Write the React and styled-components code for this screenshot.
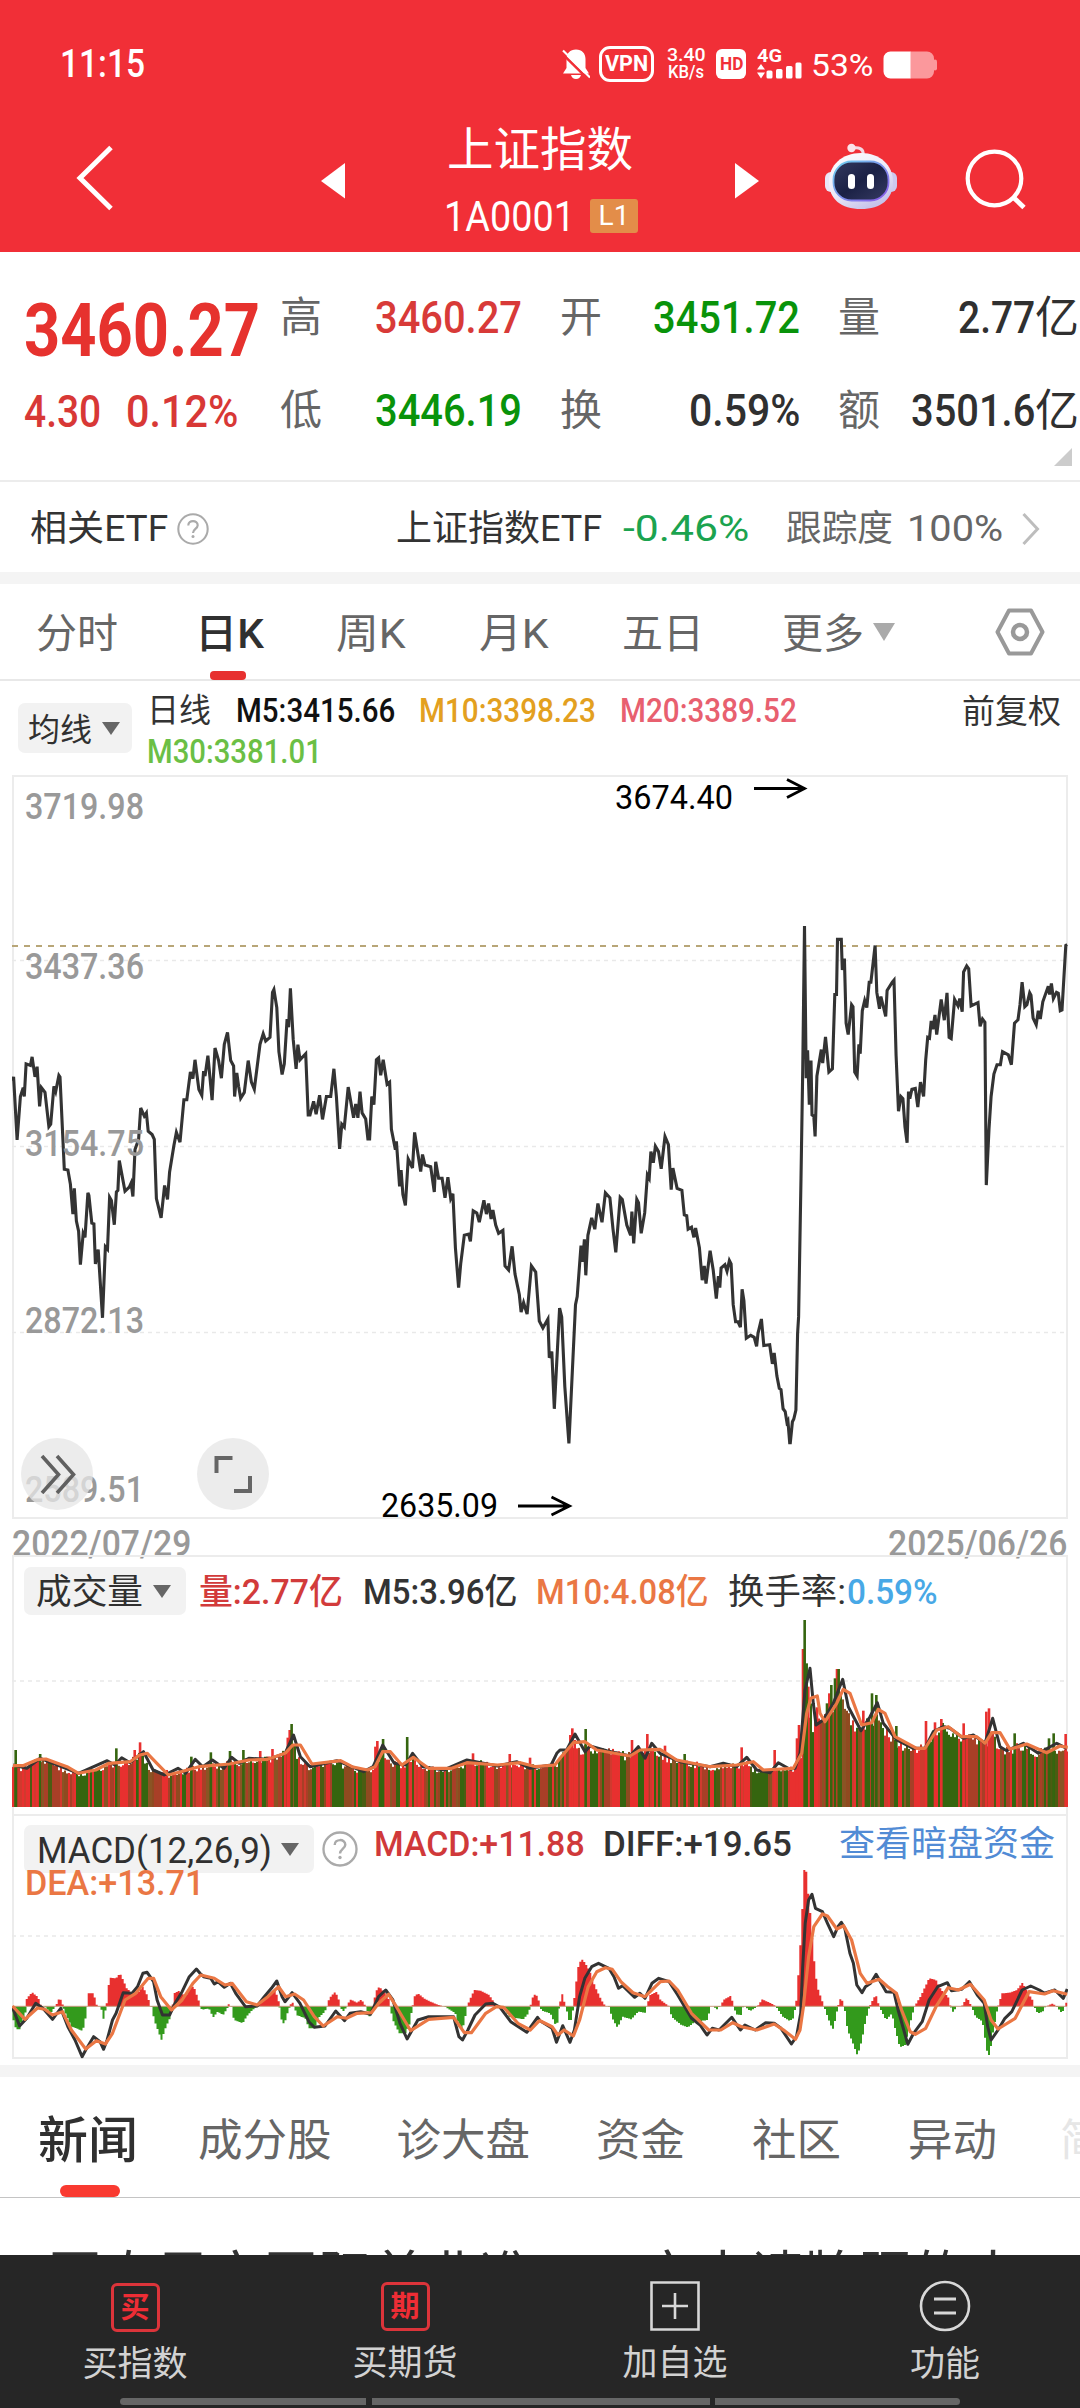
import React, { useLayoutEffect, useRef, useState } from "react";
import styled, { createGlobalStyle } from "styled-components";

const GlobalStyle = createGlobalStyle`
  * { box-sizing: border-box; }
  html, body { margin: 0; padding: 0; background: #fff; }
  body { font-family: Roboto, "Noto Sans CJK SC", sans-serif; color: #333; }
  svg { display: block; flex: none; }
`;

/* ---------- text condensed to a given width ---------- */
const FitBox = styled.span`
  display: inline-block;
  flex: none;
  white-space: nowrap;
  width: ${(p) => p.$width}px;
  margin-left: ${(p) => p.$gap || 0}px;
  color: ${(p) => p.$color || "inherit"};
`;
const FitInner = styled.span`
  display: inline-block;
  transform-origin: 0 50%;
`;
function Fit({ width, gap, color, children }) {
  const ref = useRef(null);
  const [k, setK] = useState(1);
  useLayoutEffect(() => {
    setK(width / ref.current.offsetWidth);
  }, [width, children]);
  return (
    <FitBox $width={width} $gap={gap} $color={color}>
      <FitInner ref={ref} style={{ transform: `scaleX(${k})` }}>
        {children}
      </FitInner>
    </FitBox>
  );
}

const Screen = styled.div`
  width: 1080px;
  height: 2408px;
  overflow: hidden;
  display: flex;
  flex-direction: column;
  background: #fff;
`;
const Divider = styled.div`
  height: 12px;
  flex: none;
  margin-top: ${(p) => p.$gap || 0}px;
  background: #f4f4f4;
`;

/* ---------- header ---------- */
const Header = styled.header`
  height: 252px;
  flex: none;
  background: #f12f37;
  color: #fff;
`;
const StatusBar = styled.div`
  display: flex;
  align-items: center;
  height: 84px;
  padding: 43px 0 0 60px;
  font-size: 39px;
  line-height: 42px;
`;
const Clock = styled.div`
  font-weight: 500;
`;
const StatusIcons = styled.div`
  display: flex;
  align-items: center;
  margin-left: 417px;
`;
const VpnBadge = styled.div`
  width: 55px;
  height: 36px;
  margin-left: 9px;
  border: 3px solid #fff;
  border-radius: 11px;
  font: 700 22px/30px Roboto, sans-serif;
  text-align: center;
`;
const Speed = styled.div`
  margin-left: 11px;
  width: 42px;
  display: flex;
  flex-direction: column;
  align-items: center;
  font: 500 17.5px/17px Roboto, sans-serif;
`;
const HdBadge = styled.div`
  width: 30px;
  height: 30px;
  margin-left: 9px;
  border-radius: 6px;
  background: #fff;
  color: #f12f37;
  font: 700 18px/30px Roboto, sans-serif;
  text-align: center;
`;
const Percent = styled.div`
  margin: 2px 0 0 8px;
  font-size: 32px;
`;
const NavBar = styled.div`
  display: flex;
  height: 168px;
  align-items: flex-start;
`;
const TitleBlock = styled.div`
  width: 390px;
  display: flex;
  flex-direction: column;
  align-items: center;
`;
const Title = styled.h1`
  margin: 37px 0 0;
  font-size: 46.5px;
  line-height: 58px;
  font-weight: 400;
`;
const CodeLine = styled.div`
  display: flex;
  align-items: center;
  margin: 17px 0 0 2px;
  height: 40px;
  font-size: 43px;
  line-height: 40px;
`;
const LevelTag = styled.span`
  width: 48px;
  height: 34px;
  margin-left: 15px;
  border-radius: 3px;
  background: #e38d49;
  font-size: 28px;
  line-height: 34px;
  text-align: center;
`;

/* ---------- quote ---------- */
const Quote = styled.section`
  position: relative;
  display: flex;
  height: 230px;
  flex: none;
  border-bottom: 2px solid #ececec;
`;
const PriceBlock = styled.div`
  width: 280px;
  padding: 40px 0 0 24px;
  color: #d83836;
  font-weight: 500;
`;
const Price = styled.div`
  font-size: 75px;
  line-height: 76px;
  font-weight: 700;
  color: #e6322e;
`;
const Change = styled.div`
  margin-top: 12px;
  font-size: 45px;
  line-height: 64px;
`;
const Stats = styled.div`
  flex: 1;
  display: grid;
  grid-template-columns: 242px 240px 241px;
  grid-auto-rows: 93px;
  column-gap: 38px;
  padding-top: 19px;
`;
const Stat = styled.div`
  display: flex;
  align-items: center;
  justify-content: space-between;
  font-size: 45px;
  line-height: 60px;
  font-weight: 500;
  color: ${(p) => p.$color || "#303030"};
`;
const StatLabel = styled.span`
  font-size: 42px;
  font-weight: 400;
  color: #666;
`;
const Unit = styled.span`
  font-size: 44px;
  font-weight: 400;
`;
const StatValue = styled.span`
  display: flex;
`;
const Corner = styled.div`
  position: absolute;
  right: 8px;
  bottom: 14px;
  border-left: 18px solid transparent;
  border-bottom: 18px solid #ccc;
`;

/* ---------- related fund ---------- */
const FundRow = styled.section`
  display: flex;
  align-items: center;
  height: 90px;
  flex: none;
  padding: 4px 0 0 30px;
  font-size: 36px;
  line-height: 50px;
`;
const FundLink = styled.div`
  display: flex;
  align-items: center;
  margin-left: 187px;
`;

/* ---------- period tabs ---------- */
const PeriodTabs = styled.nav`
  display: flex;
  align-items: center;
  height: 97px;
  flex: none;
  padding-left: 36px;
  border-bottom: 2px solid #e8e8e8;
  font-size: 41px;
  line-height: 60px;
  color: #666;
`;
const PeriodTab = styled.div`
  position: relative;
  margin-left: ${(p) => p.$gap || 0}px;
  padding-top: 5px;
  font-weight: ${(p) => (p.$active ? 500 : 400)};
  color: ${(p) => (p.$active ? "#303030" : "#666")};
  &::after {
    content: "";
    display: ${(p) => (p.$active ? "block" : "none")};
    position: absolute;
    left: 15px;
    bottom: -16px;
    width: 36px;
    height: 9px;
    border-radius: 4px;
    background: #e7302f;
  }
`;
const Triangle = styled.i`
  display: block;
  flex: none;
  margin-left: ${(p) => p.$gap}px;
  border: ${(p) => p.$size / 2}px solid transparent;
  border-bottom-width: 0;
  border-top: ${(p) => p.$drop}px solid ${(p) => p.$color || "#666"};
`;

/* ---------- moving averages ---------- */
const MaRow = styled.section`
  display: flex;
  height: 94px;
  flex: none;
  padding-left: 18px;
`;
const Chip = styled.div`
  display: flex;
  align-items: center;
  flex: none;
  width: ${(p) => p.$width}px;
  height: ${(p) => p.$height}px;
  padding-left: ${(p) => p.$pad}px;
  border-radius: 7px;
  background: #f2f2f2;
  font-size: ${(p) => p.$font}px;
  color: #303030;
  line-height: 40px;
`;
const MaChipSlot = styled.div`
  padding-top: 22px;
`;
const ChipLabel = styled.span`
  padding-top: 3px;
  font-weight: 400;
`;
const MaLegend = styled.div`
  width: 830px;
  padding: 10px 0 0 15px;
  font-size: 32.5px;
  line-height: 41px;
  font-weight: 500;
`;
const MaLine = styled.div`
  display: flex;
  height: 41px;
`;
const Plain = styled.span`
  font-weight: 400;
`;
const Adjust = styled.div`
  padding-top: 10px;
  font-size: 33px;
  line-height: 41px;
`;

/* ---------- charts ---------- */
const PriceChart = styled.section`
  position: relative;
  height: 744px;
  flex: none;
  margin: 0 12px;
`;
const RoundButton = styled.button`
  position: absolute;
  left: ${(p) => p.$left}px;
  bottom: 9px;
  width: 72px;
  height: 72px;
  padding: 0;
  border: 0;
  border-radius: 50%;
  background: rgba(230, 230, 230, 0.76);
  display: flex;
  align-items: center;
  justify-content: center;
`;
const DateRow = styled.div`
  display: flex;
  justify-content: space-between;
  height: 36px;
  flex: none;
  padding: 12px 13px 0 12px;
  font-size: 36.5px;
  line-height: 25px;
  color: #999;
  font-weight: 500;
`;
const Panel = styled.section`
  position: relative;
  flex: none;
  height: ${(p) => p.$height}px;
  margin: 0 12px;
  box-shadow: inset 2px 0 #ececec, inset -2px 0 #ececec, inset 0 2px #ececec,
    inset 0 ${(p) => (p.$closed ? -2 : 0)}px #ececec;
`;
const Toolbar = styled.div`
  display: flex;
  align-items: center;
  padding: 12px 0 0 12px;
  height: 60px;
  font-size: 35.5px;
  line-height: 44px;
  font-weight: 500;
`;
const Readings = styled.div`
  display: flex;
  padding-top: 2px;
`;
const MacdToolbar = styled(Toolbar)`
  position: relative;
  z-index: 1;
  align-items: flex-start;
  padding-top: 11px;
  height: 50px;
`;
const MacdReadings = styled.div`
  display: flex;
  margin-top: -3px;
`;
const DeaLine = styled.div`
  position: relative;
  z-index: 1;
  padding-left: 13px;
  font-size: 35.5px;
  line-height: 38px;
  font-weight: 500;
`;
const HelpSlot = styled.div`
  margin: 6px 0 0 8px;
`;
const MacdLayer = styled.svg`
  position: absolute;
  left: 0;
  bottom: 0;
`;

/* ---------- news ---------- */
const NewsTabs = styled.nav`
  display: flex;
  height: 121px;
  flex: none;
  padding: 34px 0 0 38px;
  border-bottom: 1px solid #c4c4c4;
  font-size: 44.5px;
  line-height: 60px;
  color: #666;
  overflow: hidden;
`;
const NewsTab = styled.div`
  position: relative;
  flex: none;
  margin-left: ${(p) => p.$gap || 0}px;
  font-size: ${(p) => (p.$active ? 50 : 44.5)}px;
  font-weight: ${(p) => (p.$active ? 500 : 400)};
  color: ${(p) => (p.$active ? "#303030" : p.$faint ? "#e6e6e6" : "#666")};
  &::after {
    content: "";
    display: ${(p) => (p.$active ? "block" : "none")};
    position: absolute;
    left: 22px;
    top: 74px;
    width: 60px;
    height: 12px;
    border-radius: 6px;
    background: #f93a30;
  }
`;
const Headline = styled.div`
  height: 57px;
  flex: none;
  padding: 48px 0 0 48px;
  overflow: hidden;
  white-space: nowrap;
  font-size: 54px;
  line-height: 64px;
`;

/* ---------- bottom bar ---------- */
const BottomBar = styled.footer`
  height: 153px;
  flex: none;
  background: #262626;
  color: #d2d2d2;
`;
const Actions = styled.div`
  display: grid;
  grid-template-columns: repeat(4, 270px);
  height: 143px;
`;
const Action = styled.div`
  display: flex;
  flex-direction: column;
  align-items: center;
  padding-top: ${(p) => p.$top}px;
  font-size: 35px;
  line-height: 40px;
  gap: 13px;
`;
const CharIcon = styled.div`
  width: 49px;
  height: 49px;
  border: 3px solid #dc343a;
  border-radius: 6px;
  color: #ee2d35;
  font-size: 29px;
  line-height: 45px;
  font-weight: 700;
  text-align: center;
`;
const HomeBar = styled.div`
  display: grid;
  grid-template-columns: 246px 338px 245px;
  column-gap: 5.5px;
  padding-left: 120px;
`;
const HomePiece = styled.i`
  height: 7px;
  background: #666;
  border-radius: ${(p) => p.$radius || "0"};
`;

/* ---------- series ---------- */
const parse = (text, sx, sy, ox, oy) =>
  text
    .trim()
    .split(/\s+/)
    .map((pair) => pair.split(",").map(Number))
    .map(([x, y]) => [ox + x / sx, oy + y / sy]);
const toPoints = (list) => list.map((p) => `${p[0].toFixed(1)},${p[1].toFixed(1)}`).join(" ");

const price = [
  ...parse(
    `35,762 38,752 48,906 57,800 65,778 68,800 73,720 85,724 90,703 98,752 104,727 111,824 116,778 126,790 137,874 142,868 151,775 156,788 165,748 168,752 180,978 190,980 197,1015 204,1088 208,1025 214,1105 220,1130 225,1212 233,1135 238,1145 246,1036 249,1042 257,1110 263,1112 267,1210 275,1175 287,1342 295,1168 301,1174 307,1047 312,1055 320,1114 326,1034 330,1030 334,957 350,1032 362,1022 367,1012 372,1045 378,930 388,905 394,828 404,848 410,840 415,885 426,893 432,905 438,1050 451,1097 461,1018 469,1052 475,985 487,920 494,888 504,912 515,808 523,808 533,740 540,756 546,710 557,783 565,797 570,738 574,750 582,700 594,809 602,681 612,712 620,755 628,672 637,643 646,712 654,725 657,800 663,742 668,775 674,804 684,790 695,712 704,765 712,782 728,672 737,646 744,664 756,655 763,545 767,538 775,582 781,690 790,746 796,720 804,610 808,630 813,535 821,660 829,732 834,673 840,710 856,695 863,845 868,845 878,812 885,843 895,797 903,856 914,800 926,800 935,732 942,800 951,928 957,868 964,875 975,777 990,852 996,818 1002,852 1008,788 1014,840 1024,855 1030,904 1035,904 1041,800 1047,820 1054,710 1060,705 1066,748 1073,710 1084,770 1091,765 1096,880 1107,930 1110,910 1119,1020 1123,980 1128,1040 1135,1067 1143,953 1155,975 1161,888 1178,984 1183,942 1190,968 1206,972 1216,1034 1220,960 1228,1000 1238,1000 1246,1048 1254,998 1262,1050 1268,1038 1275,1170 1284,1268 1290,1210 1300,1140 1312,1137 1317,1155 1325,1080 1335,1085 1342,1108 1355,1054 1362,1088 1368,1062 1375,1100 1380,1078 1388,1115 1396,1135 1408,1128 1414,1215 1424,1225 1434,1167 1442,1235 1454,1285 1459,1328 1466,1305 1476,1333 1488,1215 1500,1230 1510,1350 1520,1367 1534,1345 1538,1440 1545,1425 1552,1565`,
    2.8, 2.45, 0, 770
  ),
  ...parse(
    `57,1318 63,1340 72,1510 84,1650 94,1470 103,1310 108,1290 119,1165 124,1205 129,1150 133,1238 139,1140 150,1097 159,1125 168,1062 180,1108 190,1036 203,1048 212,1125 220,1182 233,1047 239,1052 252,1115 263,1140 267,1082 272,1160 281,1052 286,1060 294,1135 304,1085 312,992 317,1000 322,935 329,962 335,922 344,935 352,977 363,898 373,918 381,1028 386,975 398,1025 412,1030 419,1090 426,1092 430,1125 440,1120 447,1145 452,1122 463,1170 471,1250 477,1215 482,1258 494,1178 503,1225 512,1295 518,1240 522,1268 526,1220 537,1212 543,1228 550,1202 555,1210 561,1310 568,1352 575,1352 582,1365 587,1272 592,1300 599,1392 612,1385 622,1390 629,1412 633,1380 643,1345 650,1410 667,1408 675,1455 680,1428 688,1485 695,1515 700,1518 706,1565 712,1572 717,1598 720,1594 725,1648 727,1648 733,1597 737,1590 743,1568 748,1380 751,1340 758,1000 763,740 768,382 773,755 777,687 782,820 787,712 790,845 795,848 799,898 804,750 817,685 821,718 829,654 839,740 849,732 856,550 861,550 864,415 875,415 878,490 884,462 889,620 895,648 905,575 909,580 914,740 921,750 926,672 930,695 936,590 943,565 949,582 956,520 961,520 973,430 978,545 986,585 990,555 1004,604 1008,540 1023,520 1028,515 1034,700 1041,836 1048,800 1054,805 1060,875 1066,913 1070,788 1074,805 1080,782 1090,780 1097,826 1105,765 1114,800 1120,710 1126,655 1131,657 1136,615 1141,635 1147,600 1152,648 1165,562 1174,613 1182,546 1188,655 1194,658 1204,562 1214,578 1219,560 1226,592 1230,495 1239,480 1245,487 1252,578 1272,570 1278,628 1285,610 1292,618 1296,1017 1304,880 1310,800 1318,745 1327,722 1337,722 1343,690 1360,698 1369,722 1378,620 1388,612 1394,575 1400,520 1408,580 1414,575 1422,546 1426,552 1432,608 1441,624 1447,590 1453,610 1460,568 1476,530 1480,550 1485,523 1491,560 1500,545 1505,547 1511,590 1516,588 1527,430 1531,428`,
    2.904, 2.45, 540, 770
  ),
];

const volLeft = [2.613, 3, 0, 1370];
const volRight = [3, 3, 560, 1370];
const volM10 = [
  ...parse(
    `34,1187 60,1187 100,1168 120,1167 150,1180 175,1190 205,1210 250,1200 285,1180 340,1175 365,1155 385,1150 410,1180 440,1215 480,1203 520,1190 600,1182 650,1170 700,1168 745,1150 765,1125 785,1125 815,1182 890,1172 920,1190 960,1200 980,1190 1000,1145 1020,1145 1050,1185 1080,1162 1120,1195 1180,1195 1220,1178 1300,1185 1360,1178 1400,1190 1450,1185`,
    ...volLeft
  ),
  ...parse(
    `0,1165 40,1118 75,1115 110,1140 210,1158 240,1140 300,1138 350,1170 450,1190 530,1185 580,1175 610,1200 700,1195 725,1150 740,1030 752,985 772,978 780,1030 795,1055 830,1000 850,958 870,970 905,1065 935,1058 955,1018 975,1030 1005,1100 1070,1135 1095,1135 1130,1080 1165,1070 1205,1100 1250,1100 1275,1120 1295,1088 1320,1088 1350,1138 1400,1122 1460,1148 1500,1128 1523,1132`,
    ...volRight
  ),
];
const volM5 = [
  ...parse(
    `34,1185 70,1195 105,1165 150,1185 205,1210 280,1172 300,1185 318,1163 340,1178 375,1145 400,1200 430,1215 465,1195 485,1210 510,1168 530,1190 555,1170 585,1195 605,1162 625,1180 650,1165 700,1168 745,1150 767,1095 785,1160 810,1190 880,1172 950,1205 975,1190 1000,1125 1030,1180 1060,1185 1078,1150 1105,1190 1160,1200 1220,1170 1300,1188 1350,1175 1385,1195 1440,1185 1455,1150`,
    ...volLeft
  ),
  ...parse(
    `0,1140 20,1140 45,1092 75,1145 90,1128 140,1142 210,1158 235,1130 255,1165 275,1120 300,1150 360,1175 450,1190 490,1180 530,1190 560,1162 590,1200 630,1208 655,1178 690,1198 705,1195 720,1150 735,960 750,895 760,1000 768,1065 790,1050 820,1000 848,928 865,1010 903,1082 930,1040 952,998 970,1060 1010,1110 1060,1135 1095,1135 1120,1085 1150,1070 1170,1075 1210,1105 1240,1095 1275,1120 1298,1045 1320,1130 1340,1142 1390,1120 1435,1150 1490,1120 1520,1135`,
    ...volRight
  ),
];
const RED = "#e8302f";
const GREEN = "#35650f";
const spikes = [
  [RED, parse("366,1117 757,1080 752,1103 986,1113 981,1130 680,1143 712,1137 1236,1150 1332,1152 1385,1163 352,1140", ...volLeft)],
  [GREEN, parse("41,1140 304,1135 762,1062 1001,1107 1064,1101 551,1147 601,1143 636,1140 500,1160 105,1152", ...volLeft)],
  [RED, parse("717,1065 711,1105 729,837 745,950 831,897 808,970 910,1022 1098,1053 1144,1047 1125,1057 1211,1060 1287,1015 1279,1025 1517,1092 37,1075 31,1095 262,1092 216,1110 315,1127 545,1132 644,1140 771,1012", ...volRight)],
  [GREEN, parse("734,750 740,880 836,897 814,945 825,925 936,970 949,975 1009,1068 1364,1090 1481,1090 1467,1105 77,1077 801,1000 374,1152", ...volRight)],
];
const levelAt = (line, x) => {
  for (let i = 1; i < line.length; i++) {
    if (x <= line[i][0]) {
      const [ax, ay] = line[i - 1];
      const [bx, by] = line[i];
      return ay + ((by - ay) * Math.max(0, x - ax)) / (bx - ax || 1);
    }
  }
  return line[line.length - 1][1];
};
const volumeBars = (() => {
  let seed = 41;
  const rnd = () => {
    seed = (seed * 16807) % 2147483647;
    return seed / 2147483647;
  };
  const tones = [RED, RED, "#d03a2e", GREEN, GREEN, "#4b5c12", "#8f4a20", "#8a5424", "#a83f27"];
  const bars = [];
  let tone = RED;
  for (let x = 12; x < 1067; x += 2) {
    if (rnd() > 0.3) tone = tones[Math.floor(rnd() * tones.length)];
    const base = Math.max(levelAt(volM5, x + 4), levelAt(volM10, x));
    const size = 1807 - base;
    bars.push([x, base - size * (rnd() * 0.18 - 0.1), tone]);
  }
  return bars;
})();

/* Histogram outline sampled every 2px, drawn as steps on the zero line. */
const ZERO = 2006.3;
const steps = (outline) => {
  const first = outline[0][0];
  const last = outline[outline.length - 1][0];
  let d = `M${first} ${ZERO}`;
  for (let x = first; x < last; x += 2) {
    const y = levelAt(outline, x + 1).toFixed(1);
    d += `V${y}H${Math.min(x + 2, last).toFixed(1)}`;
  }
  return `${d}V${ZERO}Z`;
};

const macdL = [2.8, 3, 0, 1800];
const macdR = [2.904, 3, 540, 1800];
const macdRed = [
  [macdL, "72,619 75,595 90,577 105,590 112,605 115,619 156,619 167,592 178,619 245,619 247,580 262,580 272,619 298,619 303,560 310,533 325,535 336,520 345,540 355,565 370,580 385,580 400,560 412,585 422,619 483,619 487,580 500,573 520,590 532,560 543,560 556,600 562,619 636,619 641,612 646,619 720,619 740,595 770,570 780,600 782,619 812,619 817,603 825,619 915,619 922,595 937,577 947,590 952,619 972,619 980,598 1000,608 1012,598 1024,619 1045,619 1052,575 1062,560 1075,575 1090,600 1092,619 1155,619 1160,590 1170,580 1190,597 1220,612 1240,619 1308,619 1315,600 1328,570 1345,572 1370,585 1385,610 1395,619 1485,619 1490,595 1500,580 1508,600 1512,619"],
  [macdR, "56,619 64,580 74,619 97,619 102,570 112,495 121,477 132,490 145,515 160,560 178,600 190,619 310,619 320,585 340,575 350,600 375,619 525,619 532,600 555,587 562,619 632,619 645,598 675,612 685,619 743,619 752,500 758,400 763,300 768,200 772,200 777,260 785,340 795,470 805,560 825,619 865,619 874,592 884,619 957,619 975,583 985,619 1088,619 1105,590 1130,535 1150,540 1165,570 1185,590 1192,619 1225,619 1240,592 1253,619 1330,619 1342,580 1365,578 1385,570 1401,548 1415,575 1430,600 1435,619 1470,619 1490,610 1497,619 1525,619 1531,600"],
];
const macdGreen = [
  [macdL, "35,650 45,688 55,688 62,660 71,650 72,619 125,619 142,640 155,619 175,619 185,645 200,680 215,685 228,692 236,680 243,630 244,619 282,619 290,657 298,619 424,619 432,660 452,720 465,680 478,650 483,619 562,619 565,630 585,625 597,652 610,635 625,645 640,619 648,619 655,660 680,670 690,650 705,632 720,619 782,619 790,670 797,670 805,640 812,619 825,619 830,645 855,655 865,685 880,685 895,650 910,635 915,619 952,619 960,635 972,619 1024,619 1035,650 1045,619 1092,619 1100,660 1118,700 1135,700 1148,670 1155,619 1245,619 1275,640 1285,680 1295,690 1305,640 1308,619 1410,619 1425,650 1465,658 1480,640 1485,619 1515,619 1530,635 1545,640 1555,670 1560,675 1565,640 1567,619"],
  [macdR, "0,619 5,632 30,640 46,677 52,650 56,619 75,619 87,672 95,640 97,619 200,619 210,655 225,683 240,650 265,658 285,635 305,638 310,619 375,619 382,650 410,675 430,682 450,665 487,660 495,619 505,619 513,629 522,619 562,619 570,643 585,645 590,619 595,619 610,633 632,619 685,619 705,650 725,663 735,655 743,619 825,619 835,650 850,690 860,650 865,619 884,619 893,690 905,720 922,767 935,720 945,665 957,619 985,619 1005,660 1022,640 1030,680 1045,742 1060,735 1075,670 1088,619 1192,619 1200,637 1210,619 1253,619 1265,650 1285,665 1300,765 1306,765 1315,700 1330,619 1435,619 1445,640 1460,635 1468,619 1500,619 1516,640 1524,619"],
];
const diff = [
  ...parse("35,622 55,678 75,655 100,610 120,625 147,658 170,625 190,680 210,720 230,770 240,750 262,710 280,725 290,748 300,720 315,660 325,640 345,578 370,580 385,560 400,520 412,517 430,545 440,600 455,645 475,645 490,610 510,575 530,530 550,507 560,520 570,530 590,535 600,552 610,545 628,562 645,550 660,580 687,620 720,618 740,590 760,565 775,543 790,590 798,605 818,578 840,610 865,665 880,682 910,678 940,633 965,662 980,640 1010,635 1037,643 1060,590 1080,570 1100,600 1120,670 1140,717 1170,660 1200,650 1270,650 1285,710 1295,720 1310,690 1330,645 1360,612 1380,610 1400,622 1430,665 1475,697 1505,652", ...macdL),
  ...parse("0,662 35,685 48,727 66,677 87,727 100,690 115,590 130,535 150,500 170,490 200,505 215,530 228,565 240,557 275,592 290,580 305,595 325,550 345,535 375,545 400,585 440,655 465,675 485,705 500,685 520,690 557,652 582,690 595,675 625,690 655,668 680,670 700,685 730,732 745,710 757,640 763,500 770,370 780,300 790,283 800,325 820,335 835,370 853,410 865,380 875,367 885,385 900,460 910,490 920,555 935,578 945,560 960,550 976,523 1005,575 1028,577 1040,630 1068,733 1085,700 1110,665 1130,600 1155,560 1183,548 1195,572 1225,568 1247,545 1270,585 1290,610 1300,680 1310,720 1330,690 1350,655 1370,635 1400,570 1425,558 1450,570 1465,580 1495,570 1520,595 1531,567", ...macdR),
];
const dea = [
  ...parse("35,618 70,658 105,624 125,628 147,645 175,635 200,690 240,747 270,722 295,732 315,700 350,600 380,580 415,535 430,535 450,590 480,630 510,600 540,550 562,525 600,535 630,555 650,550 690,605 720,615 750,590 780,560 800,590 825,582 850,600 880,650 905,678 945,650 970,655 1000,640 1040,638 1060,610 1088,583 1110,620 1150,692 1200,658 1270,652 1300,698 1320,698 1360,640 1390,620 1410,622 1450,670 1485,690 1508,664", ...macdL),
  ...parse("0,662 35,680 52,705 70,690 97,708 115,660 140,560 165,515 190,503 210,508 235,545 270,578 305,590 350,545 375,543 400,570 440,640 490,690 525,690 560,668 585,680 630,690 680,672 710,692 742,718 755,690 765,620 780,470 795,380 820,342 835,348 862,387 882,377 905,420 930,520 950,550 985,538 1010,560 1035,580 1050,630 1075,695 1090,703 1120,685 1150,620 1185,563 1215,570 1250,553 1290,600 1310,660 1330,687 1380,655 1420,575 1465,582 1490,572 1531,583", ...macdR),
];

/* ---------- icons ---------- */
const Bell = () => (
  <svg width="28" height="30" viewBox="0 0 28 30">
    <path d="M14 0.500c-6 0-9.500 4-9.500 9.500v9l-3.500 5.500h26L23.500 19v-9c0-5.500-3.500-9.500-9.500-9.500z" fill="#fff" />
    <path d="M9 26h10c-.8 2.500-2.300 4-5 4s-4.200-1.500-5-4z" fill="#fff" />
    <path d="M-1 3.500L27 31" stroke="#f12f37" strokeWidth="2.600" />
    <path d="M1 1.500L28 28.500" stroke="#fff" strokeWidth="2.200" />
  </svg>
);
const Signal = () => (
  <svg width="46" height="31" viewBox="0 0 46 31" style={{ marginLeft: 11 }}>
    <text x="0" y="14" fontSize="18.500" fontWeight="700" fill="#fff" textLength="25" lengthAdjust="spacingAndGlyphs">4G</text>
    <path d="M0 21.500l4-5.500 4 5.500zM0 24.500h8l-4 6z" fill="#fff" />
    <g fill="#fff">
      <rect x="9.500" y="22.500" width="6" height="8" rx="1.500" />
      <rect x="19" y="21" width="6.500" height="9.500" rx="1.500" />
      <rect x="29" y="18" width="6.500" height="12.500" rx="1.500" />
      <rect x="38.500" y="14.500" width="6" height="16" rx="1.500" />
    </g>
  </svg>
);
const Battery = () => (
  <svg width="55" height="28" viewBox="0 0 55 28" style={{ marginLeft: 10, marginTop: 3 }}>
    <path d="M27 .5h17a7 7 0 0 1 7 7v13a7 7 0 0 1-7 7H27z" fill="#fb989c" />
    <rect x="50" y="8.500" width="4" height="11" rx="2" fill="#fb989c" />
    <path d="M27.500 .5H7.500a7 7 0 0 0-7 7v13a7 7 0 0 0 7 7h20z" fill="#fff" />
  </svg>
);
const Robot = () => (
  <svg width="72" height="68" viewBox="0 0 72 68" style={{ marginLeft: 66, marginTop: 59 }}>
    <defs>
      <linearGradient id="shell" x1="0" y1="0" x2="0.6" y2="1">
        <stop offset="0" stopColor="#fff" />
        <stop offset=".6" stopColor="#eceaf8" />
        <stop offset="1" stopColor="#c6c3ea" />
      </linearGradient>
      <linearGradient id="visor" x1="0" y1="0" x2="1" y2="1">
        <stop offset="0" stopColor="#33395f" />
        <stop offset=".5" stopColor="#1b2145" />
        <stop offset="1" stopColor="#363b63" />
      </linearGradient>
      <linearGradient id="glow" x1="0" y1="0" x2="1" y2="1">
        <stop offset="0" stopColor="#6fd3f0" />
        <stop offset="1" stopColor="#8a55e8" />
      </linearGradient>
    </defs>
    <path d="M38 12c1-6-4-8-10-7" fill="none" stroke="#f3d9e4" strokeWidth="3" />
    <circle cx="26.500" cy="5" r="4.200" fill="#fbe3ea" />
    <rect x="0" y="29" width="12" height="20" rx="6" fill="#e9e6f7" />
    <rect x="60" y="29" width="12" height="20" rx="6" fill="#cdc9ee" />
    <path d="M36 10c19 0 32 12 32 29S56 66 36 66 4 56 4 39s13-29 32-29z" fill="url(#shell)" />
    <rect x="8.500" y="18.500" width="55" height="39" rx="18" fill="url(#visor)" stroke="url(#glow)" strokeWidth="1.800" />
    <rect x="23" y="31" width="7" height="15" rx="3.500" fill="#fff" />
    <rect x="42" y="31" width="7" height="15" rx="3.500" fill="#fff" />
  </svg>
);
const Help = ({ size, gap }) => (
  <svg width={size} height={size} viewBox="0 0 34 34" style={{ marginLeft: gap }}>
    <circle cx="17" cy="17" r="15.600" fill="none" stroke="#aaa" strokeWidth="2.200" />
    <path d="M12 13.200c0-6.200 10-6 10-.3 0 3.800-5 4.200-5 8.300" fill="none" stroke="#aaa" strokeWidth="2.300" />
    <circle cx="17" cy="25" r="1.600" fill="#aaa" />
  </svg>
);

const AXIS = [
  ["3719.98", 819],
  ["3437.36", 978.5],
  ["3154.75", 1155.5],
  ["2872.13", 1333],
  ["2589.51", 1501.5],
];

export default function App() {
  return (
    <Screen>
      <GlobalStyle />
      <Header>
        <StatusBar>
          <Clock><Fit width={85}>11:15</Fit></Clock>
          <StatusIcons>
            <Bell />
            <VpnBadge><Fit width={43}>VPN</Fit></VpnBadge>
            <Speed><Fit width={39}>3.40</Fit><Fit width={36}>KB/s</Fit></Speed>
            <HdBadge><Fit width={23}>HD</Fit></HdBadge>
            <Signal />
            <Percent><Fit width={62}>53%</Fit></Percent>
            <Battery />
          </StatusIcons>
        </StatusBar>
        <NavBar>
          <svg width="40" height="70" viewBox="0 0 40 70" style={{ marginLeft: 76, marginTop: 59 }}>
            <path d="M35 4.500L4 35l31 30.500" fill="none" stroke="#fff" strokeWidth="5" />
          </svg>
          <svg width="24" height="36" viewBox="0 0 24 36" style={{ marginLeft: 205, marginTop: 79 }}>
            <path d="M24 0v35.500L0 18z" fill="#fff" />
          </svg>
          <TitleBlock>
            <Title>上证指数</Title>
            <CodeLine>
              <Fit width={131}>1A0001</Fit>
              <LevelTag>L1</LevelTag>
            </CodeLine>
          </TitleBlock>
          <svg width="24" height="36" viewBox="0 0 24 36" style={{ marginTop: 79 }}>
            <path d="M0 0v35.500L24 18z" fill="#fff" />
          </svg>
          <Robot />
          <svg width="64" height="64" viewBox="0 0 64 64" style={{ marginLeft: 67, marginTop: 64 }}>
            <circle cx="30.500" cy="30.500" r="26.800" fill="none" stroke="#fff" strokeWidth="4.200" />
            <path d="M49.500 49.500L60 59.500" stroke="#fff" strokeWidth="4.800" />
          </svg>
        </NavBar>
      </Header>

      <Quote>
        <PriceBlock>
          <Price><Fit width={236}>3460.27</Fit></Price>
          <Change><Fit width={77}>4.30</Fit><Fit width={112} gap={25}>0.12%</Fit></Change>
        </PriceBlock>
        <Stats>
          <Stat $color="#d83a38"><StatLabel>高</StatLabel><Fit width={147}>3460.27</Fit></Stat>
          <Stat $color="#09930a"><StatLabel>开</StatLabel><Fit width={147}>3451.72</Fit></Stat>
          <Stat><StatLabel>量</StatLabel><StatValue><Fit width={77}>2.77</Fit><Unit>亿</Unit></StatValue></Stat>
          <Stat $color="#09930a"><StatLabel>低</StatLabel><Fit width={147}>3446.19</Fit></Stat>
          <Stat><StatLabel>换</StatLabel><Fit width={111}>0.59%</Fit></Stat>
          <Stat><StatLabel>额</StatLabel><StatValue><Fit width={124}>3501.6</Fit><Unit>亿</Unit></StatValue></Stat>
        </Stats>
        <Corner />
      </Quote>

      <FundRow>
        <Fit width={138}>相关ETF</Fit>
        <Help size={32} gap={9} />
        <FundLink>
          <Fit width={206}>上证指数ETF</Fit>
          <Fit width={127} gap={21} color="#1ba34f">-0.46%</Fit>
          <Fit width={107} gap={36} color="#666">跟踪度</Fit>
          <Fit width={96} gap={14} color="#666">100%</Fit>
          <svg width="20" height="34" viewBox="0 0 20 34" style={{ marginLeft: 18 }}>
            <path d="M2.500 2L16.500 17 2.500 32" fill="none" stroke="#bdbdbd" strokeWidth="3" />
          </svg>
        </FundLink>
      </FundRow>
      <Divider />

      <PeriodTabs>
        <PeriodTab><Fit width={82}>分时</Fit></PeriodTab>
        <PeriodTab $active $gap={77}><Fit width={69}>日K</Fit></PeriodTab>
        <PeriodTab $gap={72}><Fit width={70}>周K</Fit></PeriodTab>
        <PeriodTab $gap={73}><Fit width={70}>月K</Fit></PeriodTab>
        <PeriodTab $gap={73}><Fit width={82}>五日</Fit></PeriodTab>
        <PeriodTab $gap={78}><Fit width={82}>更多</Fit></PeriodTab>
        <Triangle $gap={9} $size={22} $drop={18} $color="#aaa" />
        <svg width="50" height="48" viewBox="0 0 50 48" style={{ marginLeft: 100 }}>
          <path d="M14 2.500h22L47.500 24 36 45.500H14L2.500 24z" fill="none" stroke="#999" strokeWidth="4" strokeLinejoin="round" />
          <circle cx="25" cy="24" r="7" fill="none" stroke="#999" strokeWidth="4.500" />
        </svg>
      </PeriodTabs>

      <MaRow>
        <MaChipSlot>
          <Chip $width={114} $height={50} $pad={10} $font={32}>
            <ChipLabel><Fit width={64}>均线</Fit></ChipLabel>
            <Triangle $gap={10} $size={19} $drop={13} />
          </Chip>
        </MaChipSlot>
        <MaLegend>
          <MaLine>
            <Plain><Fit width={64} color="#333">日线</Fit></Plain>
            <Fit width={159} gap={25} color="#111">M5:3415.66</Fit>
            <Fit width={177} gap={24} color="#e3a020">M10:3398.23</Fit>
            <Fit width={177} gap={24} color="#e8606f">M20:3389.52</Fit>
          </MaLine>
          <MaLine><Fit width={175} color="#6bbf45">M30:3381.01</Fit></MaLine>
        </MaLegend>
        <Adjust><Fit width={99}>前复权</Fit></Adjust>
      </MaRow>

      <PriceChart>
        <svg width="1056" height="744" viewBox="12 775 1056 744">
          <rect x="13" y="776" width="1054" height="742" fill="none" stroke="#ececec" strokeWidth="2" />
          {[960.5, 1146.5, 1332.5].map((y) => (
            <line key={y} x1="12" x2="1066" y1={y} y2={y} stroke="#e9e9e9" strokeWidth="1.600" strokeDasharray="4 4" />
          ))}
          <line x1="12" x2="1066" y1="946" y2="946" stroke="#b8a678" strokeWidth="1.800" strokeDasharray="6 6" />
          <polyline points={toPoints(price)} fill="none" stroke="#333" strokeWidth="3.100" />
          {AXIS.map(([label, y]) => (
            <text key={label} x="25" y={y} fontSize="37" fontWeight="500" fill="#999" textLength="119" lengthAdjust="spacingAndGlyphs">{label}</text>
          ))}
          <g fontSize="32.500" fill="#000">
            <text x="615" y="808.500" textLength="118" lengthAdjust="spacingAndGlyphs">3674.40</text>
            <text x="381" y="1517" textLength="117" lengthAdjust="spacingAndGlyphs">2635.09</text>
          </g>
          <g fill="none" stroke="#000" strokeWidth="2.800">
            <path d="M754 788.500H804M787 779.500L804.500 788.500 787 797.500" />
            <path d="M518 1506H569M551.500 1497L569.500 1506 551.500 1515" />
          </g>
        </svg>
        <RoundButton $left={9}>
          <svg width="40" height="40" viewBox="0 0 40 40">
            <path d="M5 2l16.500 18.500L5 39M20 2l16.500 18.500L20 39" fill="none" stroke="#606060" strokeWidth="3.600" />
          </svg>
        </RoundButton>
        <RoundButton $left={185}>
          <svg width="40" height="40" viewBox="0 0 40 40">
            <path d="M3.500 19V4h16M37 22v15H21" fill="none" stroke="#666" strokeWidth="4" />
          </svg>
        </RoundButton>
      </PriceChart>
      <DateRow>
        <Fit width={179}>2022/07/29</Fit>
        <Fit width={179}>2025/06/26</Fit>
      </DateRow>

      <Panel $height={259}>
        <Toolbar>
          <Chip $width={162} $height={48} $pad={12} $font={35}>
            <ChipLabel><Fit width={107}>成交量</Fit></ChipLabel>
            <Triangle $gap={10} $size={19} $drop={13} />
          </Chip>
          <Readings>
            <Fit width={144} gap={13} color="#d23b3b">量:2.77亿</Fit>
            <Fit width={154} gap={20}>M5:3.96亿</Fit>
            <Fit width={173} gap={19} color="#ea7744">M10:4.08亿</Fit>
            <Plain><Fit width={118} gap={19}>换手率:</Fit></Plain>
            <Fit width={91} gap={1} color="#48a8e6">0.59%</Fit>
          </Readings>
        </Toolbar>
        <svg width="1056" height="192" viewBox="12 1615 1056 192">
          <line x1="12" x2="1066" y1="1681" y2="1681" stroke="#e9e9e9" strokeWidth="1.600" strokeDasharray="4 4" />
          {volumeBars.map(([x, y, tone]) => (
            <rect key={x} x={x} y={y} width="2" height={1807 - y} fill={tone} />
          ))}
          {spikes.map(([tone, list]) =>
            list.map(([x, y]) => <rect key={`${x}-${y}`} x={x - 1.3} y={y} width="2.600" height={1807 - y} fill={tone} />)
          )}
          <polyline points={toPoints(volM5)} fill="none" stroke="#333" strokeWidth="3" strokeLinejoin="round" />
          <polyline points={toPoints(volM10)} fill="none" stroke="#ea7744" strokeWidth="3.200" strokeLinejoin="round" />
        </svg>
      </Panel>

      <Panel $height={245} $closed>
        <MacdToolbar>
          <Chip $width={290} $height={48} $pad={13} $font={37}>
            <ChipLabel><Fit width={235}>MACD(12,26,9)</Fit></ChipLabel>
            <Triangle $gap={9} $size={19} $drop={13} />
          </Chip>
          <HelpSlot><Help size={36} gap={0} /></HelpSlot>
          <MacdReadings>
            <Fit width={211} gap={16} color="#d0393a">MACD:+11.88</Fit>
            <Fit width={189} gap={18}>DIFF:+19.65</Fit>
            <Plain><Fit width={216} gap={47} color="#518bd5">查看暗盘资金</Fit></Plain>
          </MacdReadings>
        </MacdToolbar>
        <DeaLine><Fit width={179} color="#ea7744">DEA:+13.71</Fit></DeaLine>
        <MacdLayer width="1056" height="195" viewBox="12 1864 1056 195">
          <line x1="12" x2="1066" y1="1936" y2="1936" stroke="#e9e9e9" strokeWidth="1.600" strokeDasharray="4 4" />
          {macdRed.map(([f, d], i) => (
            <path key={i} d={steps(parse(d, ...f))} fill={RED} />
          ))}
          {macdGreen.map(([f, d], i) => (
            <path key={i} d={steps(parse(d, ...f))} fill="#339a1c" />
          ))}
          <line x1="12" x2="1067" y1={ZERO} y2={ZERO} stroke="#c99a7c" strokeWidth="1" />
          <polyline points={toPoints(diff)} fill="none" stroke="#333" strokeWidth="3" strokeLinejoin="round" />
          <polyline points={toPoints(dea)} fill="none" stroke="#ea7744" strokeWidth="3.200" strokeLinejoin="round" />
        </MacdLayer>
      </Panel>
      <Divider $gap={6} />

      <NewsTabs>
        <NewsTab $active><Fit width={100}>新闻</Fit></NewsTab>
        <NewsTab $gap={60}>成分股</NewsTab>
        <NewsTab $gap={65}>诊大盘</NewsTab>
        <NewsTab $gap={66}>资金</NewsTab>
        <NewsTab $gap={67}>社区</NewsTab>
        <NewsTab $gap={67}>异动</NewsTab>
        <NewsTab $gap={63} $faint>简况</NewsTab>
      </NewsTabs>
      <Headline>国泰君安国际首业准，一市中请牌照的大</Headline>

      <BottomBar>
        <Actions>
          <Action $top={28}><CharIcon>买</CharIcon>买指数</Action>
          <Action $top={27}><CharIcon>期</CharIcon>买期货</Action>
          <Action $top={26}>
            <svg width="50" height="50" viewBox="0 0 50 50">
              <path d="M1.500 1.500h47v47h-47zM25 12v26M12 25h26" fill="none" stroke="#d8d8d8" strokeWidth="2.600" />
            </svg>
            加自选
          </Action>
          <Action $top={25}>
            <svg width="52" height="52" viewBox="0 0 52 52">
              <circle cx="26" cy="26" r="24" fill="none" stroke="#d8d8d8" strokeWidth="2.600" />
              <path d="M15 19h22M15 33h22" stroke="#d8d8d8" strokeWidth="2.800" />
            </svg>
            功能
          </Action>
        </Actions>
        <HomeBar>
          <HomePiece $radius="4px 0 0 4px" />
          <HomePiece />
          <HomePiece $radius="0 4px 4px 0" />
        </HomeBar>
      </BottomBar>
    </Screen>
  );
}
